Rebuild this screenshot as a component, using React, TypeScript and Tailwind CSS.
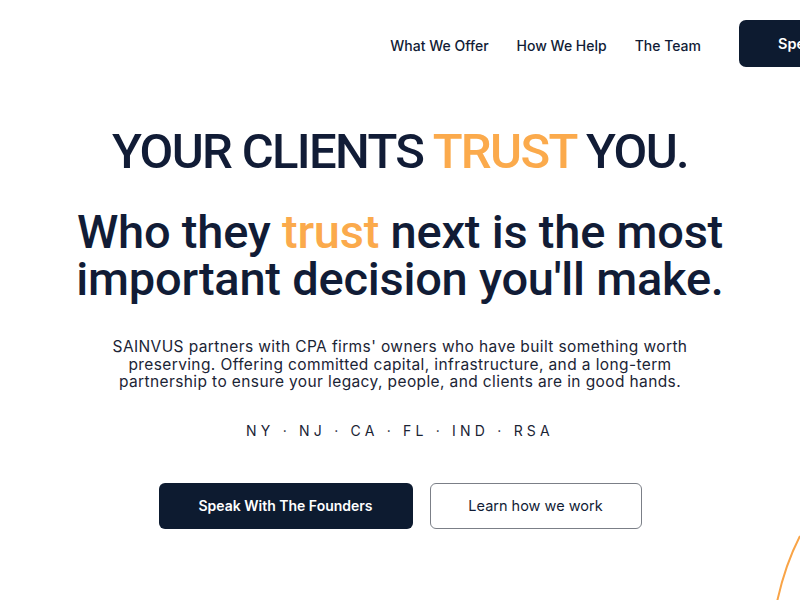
export default function App() {
  return (
    <div
      className="relative h-[600px] w-[800px] overflow-hidden bg-white text-[#111c36]"
      style={{ fontFamily: "Inter, 'Noto Sans', sans-serif" }}
    >
      {/* Top navigation */}
      <header className="flex h-[87px] items-center justify-end">
        <nav className="mt-[3px] flex items-center gap-[28px] text-[14px] font-medium">
          <a className="whitespace-nowrap">What We Offer</a>
          <a className="whitespace-nowrap">How We Help</a>
          <a className="whitespace-nowrap">The Team</a>
        </nav>
        <div className="ml-[38px] mr-[-200px] flex h-[47px] w-[261px] items-center rounded-[7px] bg-[#0d1b30] pl-[39px] text-[14.5px] font-semibold text-white">
          <span className="whitespace-nowrap">Speak With The Founders</span>
        </div>
      </header>

      {/* Hero */}
      <main className="flex flex-col items-center text-center">
        <h1
          className="mt-[40px] text-[49px] font-medium leading-none tracking-[-0.034em]"
          style={{ fontFamily: "Roboto, 'Liberation Sans', sans-serif" }}
        >
          YOUR CLIENTS <span className="text-[#fbaa4c]">TRUST</span> YOU.
        </h1>
        <h2
          className="mt-[32px] text-[47px] font-medium leading-[47px] tracking-[-0.005em]"
          style={{ fontFamily: "Roboto, 'Liberation Sans', sans-serif" }}
        >
          Who they <span className="text-[#fbaa4c]">trust</span> next is the most
          <br />
          important decision you'll make.
        </h2>
        <p className="mt-[36px] w-[620px] text-[15.5px] leading-[17.5px] tracking-[0.025em] text-[#1b2435]">
          SAINVUS partners with CPA firms' owners who have built something worth
          <br />
          preserving. Offering committed capital, infrastructure, and a long-term
          <br />
          partnership to ensure your legacy, people, and clients are in good hands.
        </p>
        <div className="mt-[29px] text-[14px] tracking-[0.3em] text-[#1b2435]">
          NY · NJ · CA · FL · IND · RSA
        </div>
        <div className="mt-[42px] flex items-center gap-[17px]">
          <button className="flex h-[46px] w-[254px] items-center justify-center rounded-[6px] bg-[#0d1b30] text-[14px] font-semibold text-white">
            Speak With The Founders
          </button>
          <button className="flex h-[46px] w-[212px] items-center justify-center rounded-[6px] border border-[#7b7f87] bg-white text-[14.5px] text-[#111c36]">
            Learn how we work
          </button>
        </div>
      </main>

      {/* Decorative arc */}
      <svg
        className="absolute left-0 top-0"
        width="800"
        height="600"
        viewBox="0 0 800 600"
        fill="none"
      >
        <path d="M800 536 Q785 565 777 602" stroke="#f9a447" strokeWidth="2" />
      </svg>
    </div>
  );
}
